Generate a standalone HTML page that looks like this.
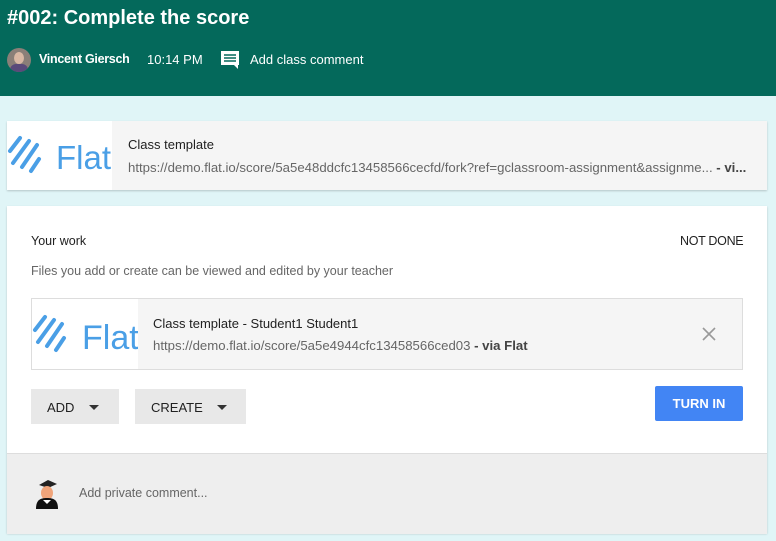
<!DOCTYPE html>
<html><head><style>
body{margin:0;width:776px;height:541px;background:#e0f5f7;font-family:"Liberation Sans",Arial,sans-serif;position:relative;overflow:hidden}
.a{position:absolute}
.hdr{left:0;top:0;width:776px;height:96px;background:#04695b;color:#fff}
.logo{background:#fff}
.logo svg{display:block}
</style></head><body>
<div class="a hdr">
 <div class="a" style="left:7px;top:7px;font-size:20px;font-weight:bold">#002: Complete the score</div>
 <div class="a" style="left:7px;top:48px;width:24px;height:24px;border-radius:50%;background:#8a7f78;overflow:hidden"><div class="a" style="left:7px;top:4px;width:10px;height:12px;border-radius:50%;background:#d9b8a4"></div><div class="a" style="left:3px;top:16px;width:18px;height:10px;background:#5a4a7a;border-radius:6px 6px 0 0"></div></div>
 <div class="a" style="left:39px;top:52px;font-size:12.5px;font-weight:bold;letter-spacing:-0.3px">Vincent Giersch</div>
 <div class="a" style="left:147px;top:52px;font-size:13px">10:14 PM</div>
 <svg class="a" style="left:220px;top:50px" width="20" height="20" viewBox="0 0 20 20"><path d="M1 1h18v14h-1v4l-4-4H1z" fill="#fff"/><path d="M4 5h12M4 8h12M4 11h12" stroke="#04695b" stroke-width="1.6"/></svg>
 <div class="a" style="left:250px;top:52px;font-size:13px">Add class comment</div>
</div>

<div class="a" style="left:7px;top:121px;width:760px;height:69px;background:#f5f5f5;box-shadow:0 1px 2px rgba(0,0,0,.2)">
 <div class="a logo" style="left:0;top:0;width:105px;height:69px">
  <svg width="105" height="69"><g stroke="#4a9fe6" stroke-width="4" stroke-linecap="round"><path d="M3 30l10-13M6 42l16-22M15 46l15-22M24 50l8-12"/></g><text x="49" y="48" font-family="Liberation Sans,sans-serif" font-size="33" fill="#4a9fe6">Flat</text></svg>
 </div>
 <div class="a" style="left:121px;top:16px;font-size:13px;color:#212121">Class template</div>
 <div class="a" style="left:121px;top:39px;font-size:13.2px;color:#666;white-space:nowrap">https://demo.flat.io/score/5a5e48ddcfc13458566cecfd/fork?ref=gclassroom-assignment&amp;assignme... <span style="color:#444;font-weight:bold">- vi...</span></div>
</div>

<div class="a" style="left:7px;top:206px;width:760px;height:327px;background:#fff;box-shadow:0 1px 2px rgba(0,0,0,.2)">
 <div class="a" style="left:24px;top:28px;font-size:12.5px;color:#212121">Your work</div>
 <div class="a" style="left:673px;top:28px;font-size:12.5px;color:#212121;letter-spacing:-0.3px">NOT DONE</div>
 <div class="a" style="left:24px;top:58px;font-size:12.5px;color:#666">Files you add or create can be viewed and edited by your teacher</div>
 <div class="a" style="left:24px;top:92px;width:710px;height:70px;background:#f5f5f5;border:1px solid #ddd">
  <div class="a logo" style="left:0;top:0;width:106px;height:70px">
   <svg width="106" height="70"><g stroke="#4a9fe6" stroke-width="4" stroke-linecap="round"><path d="M3 31l10-13M6 43l16-22M15 47l15-22M24 51l8-12"/></g><text x="50" y="50" font-family="Liberation Sans,sans-serif" font-size="34" fill="#4a9fe6">Flat</text></svg>
  </div>
  <div class="a" style="left:121px;top:17px;font-size:13px;color:#212121">Class template - Student1 Student1</div>
  <div class="a" style="left:121px;top:39px;font-size:13.2px;color:#666">https://demo.flat.io/score/5a5e4944cfc13458566ced03 <span style="color:#444;font-weight:bold">- via Flat</span></div>
  <svg class="a" style="left:670px;top:28px" width="14" height="14"><path d="M1 1l12 12M13 1L1 13" stroke="#999" stroke-width="1.6"/></svg>
 </div>
 <div class="a" style="left:24px;top:183px;width:88px;height:35px;background:#e8e8e8;font-size:13px;color:#212121"><span class="a" style="left:16px;top:11px">ADD</span><svg class="a" style="left:58px;top:16px" width="10" height="5"><path d="M0 0h10L5 5z" fill="#333"/></svg></div>
 <div class="a" style="left:128px;top:183px;width:111px;height:35px;background:#e8e8e8;font-size:13px;color:#212121"><span class="a" style="left:16px;top:11px">CREATE</span><svg class="a" style="left:82px;top:16px" width="10" height="5"><path d="M0 0h10L5 5z" fill="#333"/></svg></div>
 <div class="a" style="left:648px;top:180px;width:88px;height:35px;background:#4285f4;color:#fff;font-size:13px;font-weight:bold;text-align:center;line-height:35px;border-radius:2px">TURN IN</div>
 <div class="a" style="left:0;top:247px;width:760px;height:80px;background:#eee;border-top:1px solid #ddd">
  <svg class="a" style="left:28px;top:24px" width="24" height="32"><path d="M4 7l9-5 9 4-9 4z" fill="#222"/><ellipse cx="12" cy="15" rx="6" ry="7" fill="#f0a47a"/><path d="M1 31c0-9 4-11 11-11s11 2 11 11z" fill="#111"/><path d="M8 22l4 4 4-4z" fill="#fff"/></svg>
  <div class="a" style="left:72px;top:32px;font-size:12.5px;color:#666">Add private comment...</div>
 </div>
</div>
</body></html>
